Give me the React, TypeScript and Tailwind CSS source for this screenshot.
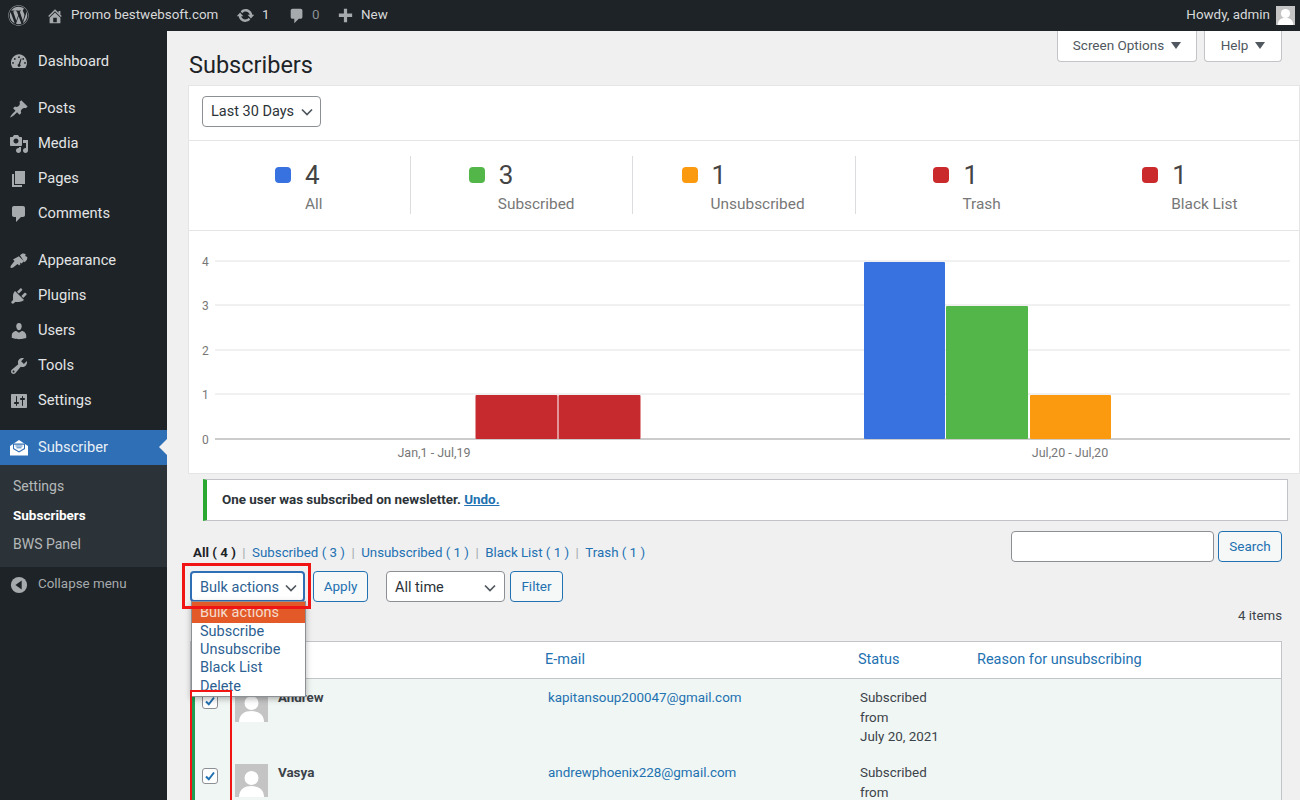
import React from "react";
import { FaWordpress } from "react-icons/fa";

const D = ({ d, s = 20, className }: { d: string; s?: number; className?: string }) => (
  <svg width={s} height={s} viewBox="0 0 20 20" fill="currentColor" fillRule="evenodd" className={className}><path d={d} /></svg>
);
const paths = {
  dash: "M3.760 16h12.480c1.100-1.430 1.760-3.210 1.760-5.140 0-4.700-3.800-8.510-8-8.510s-8 3.810-8 8.510c0 1.930.660 3.710 1.760 5.140zM10 4.300a.9.900 0 1 1 0 1.800.9.900 0 0 1 0-1.800zM5.800 6a.9.900 0 1 1 0 1.800.9.900 0 0 1 0-1.800zm8.400 0a.9.900 0 1 1 0 1.800.9.900 0 0 1 0-1.800zM4 10a.9.900 0 1 1 0 1.800A.9.900 0 0 1 4 10zm12 0a.9.900 0 1 1 0 1.800.9.900 0 0 1 0-1.800zM12.600 6.800l-1.500 5.400a1.500 1.500 0 1 1-1.500-.3l2.100-5.400z",
  pin: "M10.440 3.020l1.820-1.820 6.360 6.350-1.830 1.820c-1.050-.68-2.480-.57-3.410.36l-.75.75c-.92.93-1.040 2.350-.35 3.410l-1.830 1.820-2.410-2.410-2.800 2.790c-.42.42-3.380 2.710-3.800 2.290s1.860-3.390 2.280-3.810l2.790-2.790L4.100 9.360l1.830-1.820c1.050.69 2.480.57 3.400-.36l.75-.75c.93-.92 1.050-2.350.36-3.410z",
  media: "M13 11V4c0-.55-.45-1-1-1h-1.670L9 1H5L3.670 3H2c-.55 0-1 .45-1 1v7c0 .55.45 1 1 1h10c.55 0 1-.45 1-1zM7 4.500c1.380 0 2.500 1.120 2.500 2.500S8.380 9.500 7 9.500 4.500 8.380 4.500 7 5.620 4.500 7 4.500zM14 6h5v10.500c0 1.380-1.120 2.500-2.500 2.500S14 17.880 14 16.500s1.120-2.500 2.500-2.500c.17 0 .34.020.5.050V9h-3V6zm-4 8.050V13h2v3.500c0 1.380-1.120 2.500-2.500 2.500S7 17.880 7 16.500 8.120 14 9.500 14c.17 0 .34.020.5.050z",
  page: "M6 15V2h10v13H6zm-1 1h8v2H3V5h2v11z",
  comment: "M5 2h9c1.100 0 2 .9 2 2v7c0 1.100-.9 2-2 2h-2l-5 5v-5H5c-1.100 0-2-.9-2-2V4c0-1.100.9-2 2-2z",
  brush: "M11 4.200l1.600-1.300c1.300-.9 3.200-.5 4.100.4l-.5 1.800 2 .8c.4 1.300-.2 3-1.300 4l-1.400 1.300zM9.900 5.200l5 5-2.300 2.200-1.700-.8.5 1.700-1.300 1.200-1.500-1.500-4.500 3.500c-.7.5-2 .7-2.400.3-.4-.4-.2-1.700.3-2.400l3.500-4.500-1.500-1.500z",
  plug: "M13.110 4.360L9.870 7.600 8 5.730l3.240-3.240c.35-.34 1.050-.2 1.560.32.52.51.66 1.210.31 1.550zm-8 1.770l.91-1.120 9.010 9.010-1.190.84c-.71.71-2.630 1.160-3.820 1.160H6.140L4.900 17.260c-.59.59-1.540.59-2.120 0-.59-.58-.59-1.530 0-2.120l1.240-1.240v-3.880c0-1.130.38-3.180 1.090-3.890zm7.260 3.970l3.240-3.240c.34-.35 1.040-.21 1.550.31.52.51.66 1.210.31 1.550l-3.240 3.250z",
  user: "M10 9.250c-2.270 0-2.730-3.440-2.730-3.440C7 4.020 7.820 2 9.970 2c2.160 0 2.980 2.020 2.710 3.810 0 0-.41 3.440-2.680 3.440zm0 2.570L12.720 10c2.390 0 4.520 2.330 4.520 4.530v2.490s-3.650 1.130-7.240 1.130c-3.650 0-7.240-1.130-7.240-1.130v-2.490c0-2.250 1.940-4.480 4.470-4.480z",
  tool: "M16.680 9.770c-1.340 1.340-3.300 1.670-4.950.99l-5.410 6.520c-.99.99-2.590.99-3.570 0-.99-.98-.99-2.580 0-3.570l6.520-5.420c-.68-1.650-.35-3.610.99-4.950 1.280-1.280 3.120-1.620 4.720-1.060l-2.890 2.890 2.820 2.820 2.860-2.870c.53 1.580.18 3.390-1.090 4.650zM3.810 16.210c.4.39 1.040.39 1.430 0 .4-.4.4-1.040 0-1.430-.39-.4-1.030-.4-1.430 0-.39.39-.39 1.030 0 1.430z",
  settings: "M18 16V4c0-.55-.45-1-1-1H3c-.55 0-1 .45-1 1v12c0 .55.45 1 1 1h14c.55 0 1-.45 1-1zM8 11h1c.55 0 1 .45 1 1s-.45 1-1 1H8v1.500c0 .28-.22.5-.5.5s-.5-.22-.5-.5V13H6c-.55 0-1-.45-1-1s.45-1 1-1h1V5.500c0-.28.22-.5.5-.5s.5.22.5.5V11zm5-2h-1c-.55 0-1-.45-1-1s.45-1 1-1h1V5.500c0-.28.22-.5.5-.5s.5.22.5.5V7h1c.55 0 1 .45 1 1s-.45 1-1 1h-1v5.500c0 .28-.22.5-.5.5s-.5-.22-.5-.5V9z",
  home: "M16 8.500l1.530 1.530-1.060 1.060L10 4.620l-6.470 6.470-1.060-1.060L10 2.500l4 4v-2h2v4zm-6-2.460l6 5.990V18H4v-5.970zM12 17v-5H8v5h4z",
  sync: "M10.200 3.280c3.530 0 6.430 2.610 6.920 6h2.080l-3.500 4-3.500-4h2.320c-.45-1.970-2.210-3.450-4.320-3.450-1.450 0-2.730.71-3.540 1.780L4.950 5.660C6.230 4.200 8.110 3.280 10.200 3.280zm-.4 13.440c-3.520 0-6.430-2.610-6.920-6H.8l3.500-4c1.170 1.330 2.330 2.670 3.500 4H5.480c.45 1.970 2.210 3.450 4.320 3.450 1.450 0 2.730-.71 3.540-1.780l1.710 1.950c-1.280 1.460-3.150 2.380-5.250 2.380z",
  plus: "M17 8v3.500h-5.300V17H8.300v-5.500H3V8h5.300V3h3.400v5z",
};

const Envelope = () => (
  <svg width="20" height="20" viewBox="0 0 20 20">
    <path d="M1 8l9-6 9 6v9.500H1z" fill="#fff" />
    <path d="M4 5.500h12v5.500l-6 3.500-6-3.500z" fill="#2f6fb5" />
    <path d="M5 6.800h10v3.400l-5 3-5-3z" fill="#fff" />
    <path d="M6.500 8h7M7.500 9.800h5" stroke="#2f6fb5" strokeWidth="0.900" />
  </svg>
);
const Collapse = () => (
  <svg width="18" height="18" viewBox="0 0 20 20"><circle cx="10" cy="10" r="9" fill="#a7aaad" /><path d="M13 5v10L6 10z" fill="#1d2327" /></svg>
);
const Chevron = () => (
  <svg width="12" height="8" viewBox="0 0 12 8" fill="none" stroke="#50575e" strokeWidth="1.700"><path d="M1 1.500l5 5 5-5" /></svg>
);
const Tri = () => <span className="mt-[1px] h-0 w-0 border-x-[5px] border-t-[7px] border-x-transparent border-t-[#50575e]" />;

const groups: [string, string][][] = [
  [["Dashboard", paths.dash]],
  [["Posts", paths.pin], ["Media", paths.media], ["Pages", paths.page], ["Comments", paths.comment]],
  [["Appearance", paths.brush], ["Plugins", paths.plug], ["Users", paths.user], ["Tools", paths.tool], ["Settings", paths.settings]],
];
const margins = ["mt-[13px]", "mt-3", "mt-3"];

const stats = [
  { n: "4", l: "All", c: "bg-[#3871e0]", w: 222, sep: true, a: 86, b: 116 },
  { n: "3", l: "Subscribed", c: "bg-[#52b648]", w: 222, sep: true, a: 58, b: 87 },
  { n: "1", l: "Unsubscribed", c: "bg-[#fb9a0e]", w: 224, sep: true, a: 49, b: 78 },
  { n: "1", l: "Trash", c: "bg-[#cb2a2c]", w: 221, sep: false, a: 77, b: 106 },
  { n: "1", l: "Black List", c: "bg-[#cb2a2c]", w: 222, sep: false, a: 65, b: 94 },
];

function Row({ name, email }: { name: string; email: string }) {
  return (
    <div className="flex h-[75px] shrink-0 border-l-[4px] border-[#1f9d55] bg-[#f0f6f3] text-[13.400px]">
      <div className="w-[40px] pl-[7px] pt-[14px]">
        <span className="flex h-[16px] w-[16px] items-center justify-center rounded-[3px] border border-[#8c8f94] bg-white">
          <svg width="12" height="12" viewBox="0 0 12 12" fill="none" stroke="#2271b1" strokeWidth="2"><path d="M2 6.500l2.800 2.800L10 2.500" /></svg>
        </span>
      </div>
      <div className="mt-[10px] flex h-[33px] w-[33px] items-end justify-center overflow-hidden bg-[#c4c4c4]">
        <svg width="33" height="33" viewBox="0 0 33 33" fill="#fff"><circle cx="16.500" cy="14" r="7" /><path d="M4 33c0-8 6-11 12.500-11S29 25 29 33z" /></svg>
      </div>
      <div className="ml-[10px] w-[270px] pt-[9px] font-bold text-[#3c434a]">{name}</div>
      <div className="w-[312px] pt-[9px] text-[#2271b1]">{email}</div>
      <div className="w-[120px] pt-[9px] leading-[19.700px] text-[#3c434a]">Subscribed<br />from<br />July 20, 2021</div>
    </div>
  );
}

export default function App() {
  return (
    <div className="flex h-[800px] w-[1300px] flex-col overflow-hidden bg-[#f0f0f1] font-['Roboto',sans-serif]">
      <header className="flex h-[31px] shrink-0 items-center bg-[#1d2327] text-[13.400px] text-[#d8d9da]">
        <span className="ml-[8px] text-[#a7aaad]"><FaWordpress size={21} /></span>
        <span className="ml-[17px] text-[#a7aaad]"><D d={paths.home} s={18} /></span>
        <span className="ml-[7px] w-[147px] whitespace-nowrap">Promo bestwebsoft.com</span>
        <span className="ml-[18px] text-[#a7aaad]"><D d={paths.sync} s={19} /></span>
        <span className="ml-[7px] w-[8px]">1</span>
        <span className="ml-[18px] text-[#a7aaad]"><D d={paths.comment} s={18} /></span>
        <span className="ml-[6px] w-[8px] text-[#8c8f94]">0</span>
        <span className="ml-[16px] text-[#a7aaad]"><D d={paths.plus} s={19} /></span>
        <span className="ml-[6px]">New</span>
        <span className="ml-auto">Howdy, admin</span>
        <span className="ml-[6px] mr-[5px] flex h-[19px] w-[19px] items-end justify-center bg-[#c4c4c4]">
          <svg width="19" height="19" viewBox="0 0 33 33" fill="#fff"><circle cx="16.500" cy="13" r="8" /><path d="M3 33c0-9 6-12 13.500-12S30 24 30 33z" /></svg>
        </span>
      </header>
      <div className="flex min-h-0 flex-1">
        <aside className="w-[167px] shrink-0 bg-[#1d2327] text-[14.700px] text-[#e3e4e5]">
          {groups.map((group, i) => (
            <div key={i} className={margins[i]}>
              {group.map(([label, d]) => (
                <div key={label} className="flex h-[35px] items-center">
                  <span className="flex w-[38px] justify-center text-[#a7aaad]"><D d={d} /></span>
                  <span>{label}</span>
                </div>
              ))}
            </div>
          ))}
          <div className="relative mt-3 flex h-[35px] items-center bg-[#2f6fb5] text-white">
            <span className="flex w-[38px] justify-center"><Envelope /></span>
            <span className="text-[#e8eff7]">Subscriber</span>
            <span className="absolute right-0 top-[9px] h-0 w-0 border-y-[8px] border-r-[8px] border-y-transparent border-r-[#f0f0f1]" />
          </div>
          <div className="flex h-[102px] flex-col bg-[#2c3338] pt-[7px] text-[14px] text-[#b5b8ba]">
            <div className="flex h-[29px] items-center pl-[13px]">Settings</div>
            <div className="flex h-[29px] items-center pl-[13px] text-[13.500px] font-bold text-white">Subscribers</div>
            <div className="flex h-[29px] items-center pl-[13px]">BWS Panel</div>
          </div>
          <div className="flex h-[35px] items-center text-[13.400px] text-[#a7aaad]">
            <span className="flex w-[38px] justify-center"><Collapse /></span>
            Collapse menu
          </div>
        </aside>
        <main className="relative min-w-0 flex-1">
          <div className="flex justify-end gap-[7px] pr-[18px]">
            <div className="flex h-[31px] w-[140px] items-center justify-center gap-[7px] rounded-b-[4px] border border-t-0 border-[#c3c4c7] bg-white pb-[2px] text-[13.500px] text-[#50575e]">Screen Options <Tri /></div>
            <div className="flex h-[31px] w-[78px] items-center justify-center gap-[7px] rounded-b-[4px] border border-t-0 border-[#c3c4c7] bg-white pb-[2px] text-[13.500px] text-[#50575e]">Help <Tri /></div>
          </div>
          <h1 className="ml-[22px] h-[23px] text-[23.500px] leading-[6px] text-[#1d2327]">Subscribers</h1>
          <section className="ml-[21px] border border-[#e5e5e5] bg-white">
            <div className="flex h-[55px] items-start border-b border-[#e5e5e5] pl-[13px] pt-[10px]">
              <div className="flex h-[31px] w-[119px] items-center justify-between rounded-[4px] border border-[#8c8f94] pl-[8px] pr-[7px] pt-[1px] text-[14.500px] text-[#2c3338]">
                Last 30 Days
                <Chevron />
              </div>
            </div>
            <div className="flex h-[90px] items-start border-b border-[#e5e5e5] pt-[15px]">
              {stats.map((s) => (
                <div key={s.l} style={{ width: s.w }} className={`h-[58px] ${s.sep ? "border-r border-[#dcdcde]" : ""}`}>
                  <div style={{ paddingLeft: s.a }} className="flex h-[38px] items-center gap-[14px]">
                    <span className={`h-[16px] w-[16px] rounded-[4px] ${s.c}`} />
                    <span className="text-[26px] leading-none text-[#444]">{s.n}</span>
                  </div>
                  <div style={{ paddingLeft: s.b }} className="text-[15.400px] leading-[20px] text-[#777]">{s.l}</div>
                </div>
              ))}
            </div>
            <svg width="1111" height="242" viewBox="0 0 1111 242" className="block font-['Roboto',sans-serif]">
              {[30, 74, 119, 163].map((y) => <line key={y} x1="26" x2="1101" y1={y} y2={y} stroke="#e2e2e2" />)}
              <line x1="26" x2="1101" y1="208" y2="208" stroke="#999" />
              {["4", "3", "2", "1", "0"].map((t, i) => <text key={t} x="13" y={[35, 79, 124, 168, 213][i]} fontSize="12" fill="#777">{t}</text>)}
              <rect x="286.500" y="164" width="82" height="44" rx="1" fill="#c62a2e" />
              <rect x="369.500" y="164" width="82" height="44" rx="1" fill="#c62a2e" />
              <rect x="675" y="31" width="81" height="177" rx="1" fill="#3871e0" />
              <rect x="757" y="75" width="82" height="133" rx="1" fill="#52b648" />
              <rect x="841" y="164" width="81" height="44" rx="1" fill="#fb9a0e" />
              <text x="245" y="226" fontSize="12.500" fill="#777" textAnchor="middle">Jan,1 - Jul,19</text>
              <text x="881" y="226" fontSize="12.500" fill="#777" textAnchor="middle">Jul,20 - Jul,20</text>
            </svg>
          </section>
          <div className="ml-[36px] mr-[12px] mt-[5px] flex h-[42px] items-center border border-l-[4px] border-[#c3c4c7] border-l-[#2aa832] bg-white pl-[15px] pt-[1px] text-[13.400px] font-bold text-[#2c3338]">
            One user was subscribed on newsletter.&nbsp;<span className="text-[#2271b1] underline">Undo.</span>
          </div>
          <div className="relative mx-[18px] ml-[23px] mt-[10px] flex h-[31px] items-start justify-between">
            <div className="ml-[3px] mt-[12px] flex items-center gap-[6.500px] text-[13.300px] leading-[20px] text-[#2271b1]">
              <b className="text-[#1d2327]">All ( 4 )</b><span className="text-[#a7aaad]">|</span>
              <span>Subscribed ( 3 )</span><span className="text-[#a7aaad]">|</span>
              <span>Unsubscribed ( 1 )</span><span className="text-[#a7aaad]">|</span>
              <span>Black List ( 1 )</span><span className="text-[#a7aaad]">|</span>
              <span>Trash ( 1 )</span>
            </div>
            <div className="flex gap-[4px]">
              <div className="h-[31px] w-[203px] rounded-[4px] border border-[#8c8f94] bg-white" />
              <div className="flex h-[31px] w-[64px] items-center justify-center rounded-[4px] border border-[#2271b1] bg-[#f6f7f7] pb-[1px] text-[13.500px] text-[#2271b1]">Search</div>
            </div>
          </div>
          <div className="ml-[23px] mt-[9px] flex h-[31px] items-center text-[14.500px]">
            <div className="flex h-[31px] w-[115px] items-center justify-between rounded-[4px] border-2 border-[#2f6fb5] bg-white pl-[8px] pr-[6px] pt-[2px] text-[#2c5f92]">
              Bulk actions
              <Chevron />
            </div>
            <div className="ml-[8px] flex h-[31px] w-[55px] items-center justify-center rounded-[4px] border border-[#2271b1] bg-[#f6f7f7] text-[13.500px] text-[#2271b1]">Apply</div>
            <div className="ml-[18px] flex h-[31px] w-[119px] items-center justify-between rounded-[4px] border border-[#8c8f94] bg-white pl-[8px] pr-[8px] pt-[2px] text-[#2c3338]">
              All time
              <Chevron />
            </div>
            <div className="ml-[5px] flex h-[31px] w-[53px] items-center justify-center rounded-[4px] border border-[#2271b1] bg-[#f6f7f7] text-[13.500px] text-[#2271b1]">Filter</div>
          </div>
          <div className="mr-[18px] mt-[4px] flex h-[20px] items-center justify-end text-[13.300px] text-[#3c434a]">4 items</div>
          <div className="mr-[18px] ml-[23px] mt-[15px] border border-b-0 border-[#c3c4c7] bg-white">
            <div className="flex h-[37px] items-center border-b border-[#c3c4c7] text-[14.500px] text-[#2271b1]">
              <span className="ml-[354px] w-[313px]">E-mail</span>
              <span className="w-[119px]">Status</span>
              <span>Reason for unsubscribing</span>
            </div>
            <Row name="Andrew" email="kapitansoup200047@gmail.com" />
            <Row name="Vasya" email="andrewphoenix228@gmail.com" />
          </div>
          <div className="absolute left-[24px] top-[570px] z-10 flex h-[96px] w-[115px] flex-col border border-[#8c8f94] bg-white text-[14.500px] leading-[18.200px] text-[#2c5f92] shadow-[0_2px_6px_rgba(0,0,0,0.3)]">
            <div className="h-[21px] shrink-0 overflow-hidden bg-[#e35a28] pl-[8px] pt-[2px] text-[#f5dccf]">Bulk actions</div>
            <div className="pl-[8px]">Subscribe</div>
            <div className="pl-[8px]">Unsubscribe</div>
            <div className="pl-[8px]">Black List</div>
            <div className="pl-[8px]">Delete</div>
          </div>
          <div className="absolute left-[15px] top-[532px] z-20 h-[46px] w-[129px] border-[3px] border-[#f01414]" />
          <div className="absolute left-[23px] top-[659px] z-20 h-[120px] w-[42px] border-2 border-[#f01414]" />
        </main>
      </div>
    </div>
  );
}
